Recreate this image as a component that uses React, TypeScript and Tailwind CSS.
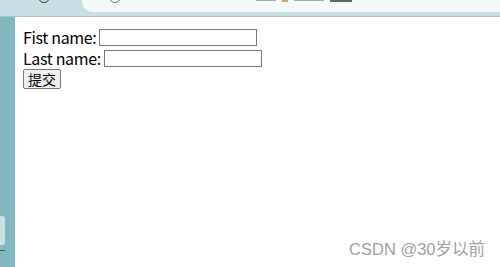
import { useState } from "react";

const sans = "font-['Microsoft_YaHei','Noto_Sans_CJK_SC','Liberation_Sans',sans-serif]";

function BrowserTop() {
  return (
    <div className="flex h-[17px] shrink-0 items-start overflow-hidden border-b border-[#a7c3c8] bg-[#c6dfe3]">
      {/* reload icon, cut off by the top of the shot */}
      <div className="ml-[38px] mt-[-9px] h-[12px] w-[12px] rounded-full border-[1.5px] border-[#333]" />
      <div className="ml-[32px] flex h-[12px] flex-1 items-start rounded-bl-[10px] bg-[#f3f8f9]">
        <div className="ml-[27px] mt-[-9px] h-[12px] w-[12px] rounded-full border border-[#777]" />
        <div className="ml-[135px] mt-[-2px] flex items-start gap-[6px]">
          <span className="h-[3px] w-[20px] bg-[#aaa]" />
          <span className="h-[4px] w-[6px] bg-[#c7a77a]" />
          <span className="h-[3px] w-[30px] bg-[#aaa]" />
          <span className="h-[4px] w-[22px] bg-[#666]" />
        </div>
      </div>
    </div>
  );
}

export default function App() {
  const [first, setFirst] = useState("");
  const [last, setLast] = useState("");

  return (
    <div className={`relative flex h-[267px] w-[500px] flex-col overflow-hidden bg-white ${sans}`}>
      <BrowserTop />
      <div className="flex flex-1">
        <aside className="flex w-[15px] shrink-0 flex-col bg-[#7fb8c1]">
          <div className="mt-[199px] h-[29px] w-[5px] rounded-r-[3px] bg-[#c6e0e4]" />
          <div className="mt-[5px] h-px w-[5px] bg-[#35575c]" />
        </aside>
        <main className="flex-1 pl-[8px] pt-[12px] text-[16px] text-black">
          <form
            onSubmit={(e) => e.preventDefault()}
            className="flex flex-col items-start gap-[4px]"
          >
            <label className="flex h-[17px] items-center leading-[17px]">
              <span className="mr-[3px] tracking-[-0.35px]">Fist name:</span>
              <input
                value={first}
                onChange={(e) => setFirst(e.target.value)}
                className="h-[17px] w-[158px] border border-[#767676] bg-white outline-none"
              />
            </label>
            <label className="flex h-[17px] items-center leading-[17px]">
              <span className="mr-[3px] tracking-[-0.35px]">Last name:</span>
              <input
                value={last}
                onChange={(e) => setLast(e.target.value)}
                className="h-[17px] w-[158px] border border-[#767676] bg-white outline-none"
              />
            </label>
            <button
              type="submit"
              className="mt-[-2px] flex h-[20px] w-[38px] items-center justify-center rounded-[2px] border border-[#767676] bg-[#efefef] text-[14px] leading-none"
            >
              提交
            </button>
          </form>
        </main>
      </div>
      <div className="absolute bottom-[10px] right-[15px] font-['Liberation_Sans','Noto_Sans_CJK_SC',sans-serif] text-[16.5px] leading-none text-[#a0a0a0]">
        CSDN @30岁以前
      </div>
    </div>
  );
}
